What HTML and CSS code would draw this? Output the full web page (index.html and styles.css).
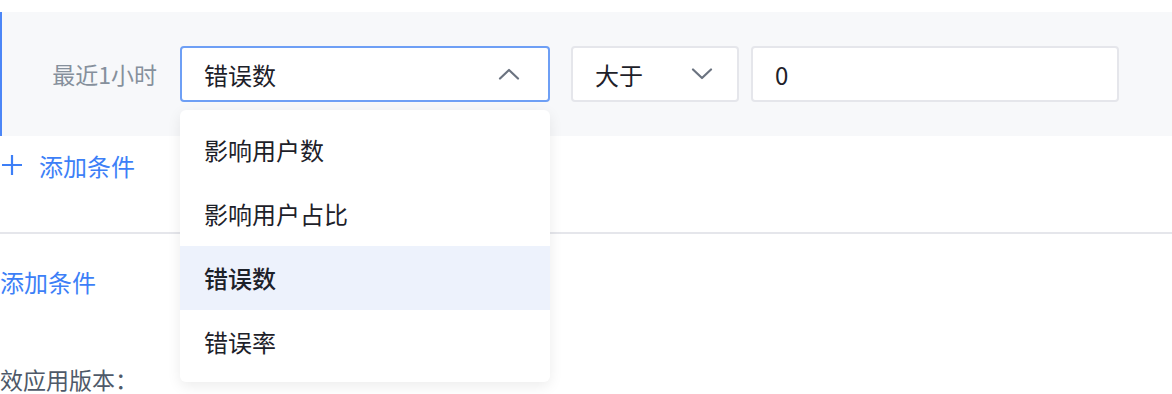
FILE: index.html
```html
<!DOCTYPE html>
<html lang="zh-CN">

<head>
    <meta charset="UTF-8">
    <meta name="viewport" content="width=device-width, initial-scale=1.0">
    <title>告警规则</title>
    <link rel="stylesheet" href="styles.css">
</head>
<body>
    <div class="rule-panel">
        <div class="rule-row">
            <div class="rule-label">最近1小时</div>
            <div class="select select-metric is-open">
                <span class="select-value">错误数</span>
                <svg class="chevron" width="22" height="12" viewBox="0 0 22 12">
                    <path d="M2 10.5 L11 2 L20 10.5" fill="none" stroke="#6b7380" stroke-width="2.2" stroke-linecap="round" stroke-linejoin="round"/>
                </svg>
                <ul class="dropdown">
                    <li class="dropdown-item">影响用户数</li>
                    <li class="dropdown-item">影响用户占比</li>
                    <li class="dropdown-item active">错误数</li>
                    <li class="dropdown-item">错误率</li>
                </ul>
            </div>
            <div class="select select-op">
                <span class="select-value">大于</span>
                <svg class="chevron" width="22" height="12" viewBox="0 0 22 12">
                    <path d="M2 1.5 L11 10 L20 1.5" fill="none" stroke="#6b7380" stroke-width="2.2" stroke-linecap="round" stroke-linejoin="round"/>
                </svg>
            </div>
            <div class="input-box">0</div>
        </div>
    </div>

    <div class="add-row">
        <svg class="plus" width="22" height="22" viewBox="0 0 22 22">
            <path d="M11 1 V21 M1 11 H21" fill="none" stroke="#3d7ff7" stroke-width="2.2"/>
        </svg>
        <span>添加条件</span>
    </div>

    <div class="divider"></div>

    <div class="add-link">添加条件</div>

    <div class="field-label">效应用版本：</div>
</body>
</html>
```

FILE: styles.css
```css
body {
    font-family: "Noto Sans CJK SC", "Noto Sans", sans-serif;
    margin: 0;
    padding: 0;
    background-color: #fff;
    color: #1d2129;
    overflow: hidden;
}

.rule-panel {
    margin-top: 12px;
    height: 124px;
    background-color: #f7f8fa;
    border-left: 2px solid #4c86f7;
    box-sizing: border-box;
    padding-top: 34px;
}

.rule-row {
    display: flex;
    align-items: center;
}

.rule-label {
    width: 155px;
    text-align: right;
    padding-right: 23px;
    font-size: 23px;
    color: #86909c;
}

.select,
.input-box {
    height: 56px;
    box-sizing: border-box;
    background-color: #fff;
    border: 2px solid #e5e6eb;
    border-radius: 4px;
    display: flex;
    align-items: center;
    font-size: 24px;
    padding: 0 22px;
}

.select {
    justify-content: space-between;
    position: relative;
}

.select-metric {
    width: 370px;
    margin-right: 21px;
}

.select-metric.is-open {
    border-color: #6e9ff5;
}

.select-metric .chevron {
    margin-right: 6px;
}

.select-op {
    width: 168px;
    margin-right: 12px;
}

.select-op .chevron {
    margin-right: 2px;
}

.input-box {
    width: 368px;
}

.dropdown {
    position: absolute;
    top: 62px;
    left: -2px;
    width: 370px;
    margin: 0;
    padding: 8px 0;
    list-style: none;
    background-color: #fff;
    border-radius: 6px;
    box-shadow: 0 4px 14px rgba(0, 0, 0, 0.08);
    box-sizing: border-box;
    z-index: 10;
}

.dropdown-item {
    height: 64px;
    line-height: 64px;
    padding: 0 24px;
    font-size: 24px;
    color: #1d2129;
}

.dropdown-item.active {
    background-color: #edf2fc;
    font-weight: 500;
}

.add-row {
    height: 58px;
    display: flex;
    align-items: center;
    gap: 16px;
    padding-left: 1px;
    color: #3d7ff7;
    font-size: 24px;
}

.divider {
    margin-top: 38px;
    height: 2px;
    background-color: #e5e6eb;
}

.add-link {
    margin-top: 32px;
    color: #3d7ff7;
    font-size: 24px;
    line-height: 32px;
}

.field-label {
    margin-top: 66px;
    font-size: 23px;
    color: #4e5969;
    line-height: 30px;
}
```
